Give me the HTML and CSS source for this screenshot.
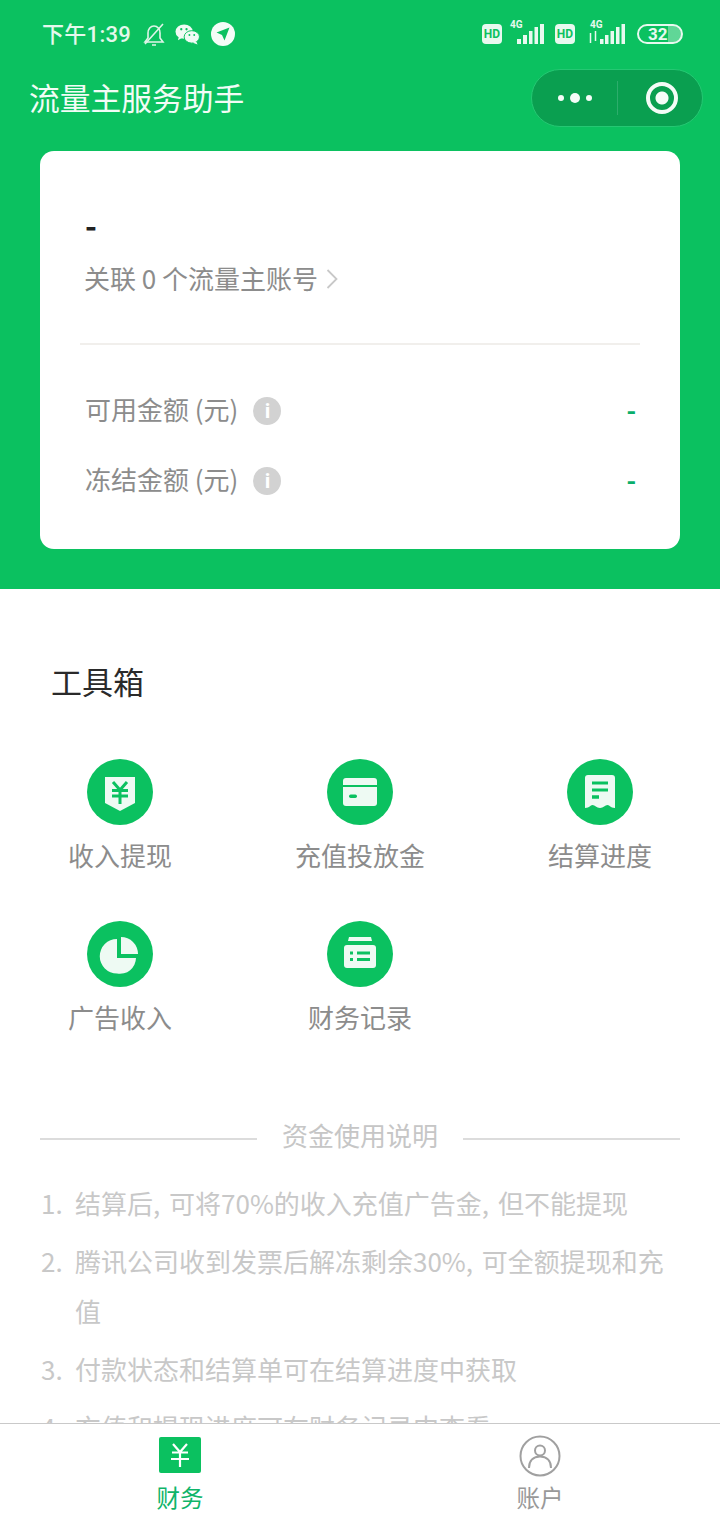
FILE: index.html
```html
<!DOCTYPE html>
<html lang="zh-CN">
<head>
    <meta charset="UTF-8">
    <meta name="viewport" content="width=device-width, initial-scale=1.0">
    <title>流量主服务助手</title>
    <link rel="stylesheet" href="styles.css">
</head>
<body>
    <div id="main">
        <div class="top">
            <div class="status_bar">
                <div class="status_left">
                    <span class="time">下午1:39</span>
                    <svg class="st_bell" viewBox="0 0 24 24" fill="none" stroke="#dff5e8" stroke-width="1.6">
                        <path d="M3 20h18l-3-4v-5c0-4-2.500-7-6-7s-6 3-6 7v5z"/>
                        <path d="M10 23h4M3 22L21 2"/>
                    </svg>
                    <svg class="st_wechat" viewBox="0 0 26 24" fill="#f1fbf5">
                        <ellipse cx="9.500" cy="9" rx="9" ry="7.500"/>
                        <path d="M4 14l-1 4 5-3z"/>
                        <ellipse cx="17.500" cy="14.500" rx="8" ry="6.500" stroke="#0bc160" stroke-width="1"/>
                        <path d="M22 19l1.500 3.500-5-2z"/>
                        <circle cx="6.500" cy="6.500" r="1.200" fill="#0bc160"/>
                        <circle cx="12" cy="6.500" r="1.200" fill="#0bc160"/>
                        <circle cx="15" cy="12.500" r="1" fill="#0bc160"/>
                        <circle cx="20" cy="12.500" r="1" fill="#0bc160"/>
                    </svg>
                    <svg class="st_nav" viewBox="0 0 24 24">
                        <circle cx="12" cy="12" r="12" fill="#f4fcf7"/>
                        <path d="M18.500 5.500L5.500 10.500l5.500 2.500 2.500 5.500z" fill="#0bc160"/>
                    </svg>
                </div>
                <div class="status_right">
                    <span class="hd">HD</span>
                    <span class="signal sig_one">
                        <span class="net">4G</span>
                        <svg class="bars" viewBox="0 0 27 20" fill="#e8f9ef">
                            <rect x="0" y="15" width="4" height="5"/>
                            <rect x="6" y="11" width="4" height="9"/>
                            <rect x="12" y="7" width="3.500" height="13"/>
                            <rect x="17.500" y="3" width="3.500" height="17"/>
                            <rect x="23" y="0" width="4" height="20"/>
                        </svg>
                    </span>
                    <span class="hd">HD</span>
                    <span class="signal sig_two">
                        <span class="net">4G</span>
                        <svg class="arrows" viewBox="0 0 10 12" fill="none" stroke="#e8f9ef" stroke-width="1.500">
                            <path d="M2.500 12V2M7.500 0v10"/>
                        </svg>
                        <svg class="bars" viewBox="0 0 25 20" fill="#e8f9ef">
                            <rect x="0" y="15" width="3.500" height="5"/>
                            <rect x="5" y="11" width="3.500" height="9"/>
                            <rect x="10.500" y="7" width="3.500" height="13"/>
                            <rect x="16" y="3" width="3.500" height="17"/>
                            <rect x="21.500" y="0" width="3.500" height="20"/>
                        </svg>
                    </span>
                    <span class="battery">32</span>
                </div>
            </div>

            <div class="nav_bar">
                <span class="nav_title">流量主服务助手</span>
                <div class="capsule">
                    <div class="capsule_btn capsule_more">
                        <span class="dot"></span>
                        <span class="dot dot_big"></span>
                        <span class="dot"></span>
                    </div>
                    <div class="capsule_sep"></div>
                    <div class="capsule_btn capsule_home">
                        <span class="target"></span>
                    </div>
                </div>
            </div>

            <div class="card">
                <div class="acc_name">-</div>
                <div class="acc_link">
                    <span>关联 0 个流量主账号</span>
                    <svg class="chevron" viewBox="0 0 12 22" fill="none" stroke="#c8c8c8" stroke-width="1.800">
                        <path d="M1.500 2l9 9-9 9"/>
                    </svg>
                </div>
                <div class="divider"></div>
                <div class="amount_row">
                    <span>可用金额 (元)</span>
                    <span class="info">i</span>
                    <span class="amount">-</span>
                </div>
                <div class="amount_row">
                    <span>冻结金额 (元)</span>
                    <span class="info">i</span>
                    <span class="amount">-</span>
                </div>
            </div>
        </div>

        <div class="tools">
            <h2>工具箱</h2>
            <div class="tool_grid">
                <div class="tool">
                    <svg class="tool_icon" viewBox="0 0 66 66">
                        <circle cx="33" cy="33" r="33" fill="#0bc160"/>
                        <path d="M18 18h30v26l-15 8-15-8z" fill="#eefaf3"/>
                        <path d="M26 23l7 8 7-8M33 31v14M25 31.500h16M25 37h16" fill="none" stroke="#0bc160" stroke-width="3"/>
                    </svg>
                    <span>收入提现</span>
                </div>
                <div class="tool">
                    <svg class="tool_icon" viewBox="0 0 66 66">
                        <circle cx="33" cy="33" r="33" fill="#0bc160"/>
                        <path d="M16 22a3 3 0 0 1 3-3h28a3 3 0 0 1 3 3v4H16z" fill="#eefaf3"/>
                        <path d="M16 28h34v16a3 3 0 0 1-3 3H19a3 3 0 0 1-3-3z" fill="#eefaf3"/>
                        <rect x="22" y="35.500" width="8" height="3.500" rx="1.700" fill="#0bc160"/>
                    </svg>
                    <span>充值投放金</span>
                </div>
                <div class="tool">
                    <svg class="tool_icon" viewBox="0 0 66 66">
                        <circle cx="33" cy="33" r="33" fill="#0bc160"/>
                        <path d="M18 19a3 3 0 0 1 3-3h24a3 3 0 0 1 3 3v30c-5 0-5-3-7.500-3s-4 3-7.500 3-5-3-7.500-3-2.500 3-7.500 3z" fill="#eefaf3"/>
                        <path d="M25 24h16M25 31h16" stroke="#0bc160" stroke-width="3"/>
                        <path d="M25 38h7" stroke="#0bc160" stroke-width="3.500"/>
                    </svg>
                    <span>结算进度</span>
                </div>
                <div class="tool">
                    <svg class="tool_icon" viewBox="0 0 66 66">
                        <circle cx="33" cy="33" r="33" fill="#0bc160"/>
                        <path d="M30 18v19h19a16 16 0 0 1-19 15.500A16.500 16.500 0 0 1 30 18z" fill="#eefaf3"/>
                        <path d="M34 16a17 17 0 0 1 17 17H34z" fill="#eefaf3"/>
                    </svg>
                    <span>广告收入</span>
                </div>
                <div class="tool">
                    <svg class="tool_icon" viewBox="0 0 66 66">
                        <circle cx="33" cy="33" r="33" fill="#0bc160"/>
                        <path d="M22 16h22l1 4H21z" fill="#eefaf3"/>
                        <rect x="17" y="24" width="32" height="23" rx="3" fill="#eefaf3"/>
                        <path d="M30 32h13M30 38.500h13M23 32h3M23 38.500h3" stroke="#0bc160" stroke-width="3"/>
                    </svg>
                    <span>财务记录</span>
                </div>
            </div>
        </div>

        <div class="notes">
            <div class="notes_title">
                <span class="line"></span>
                <span>资金使用说明</span>
                <span class="line"></span>
            </div>
            <ol class="notes_list">
                <li><span class="num">1.</span><span>结算后, 可将70%的收入充值广告金, 但不能提现</span></li>
                <li><span class="num">2.</span><span>腾讯公司收到发票后解冻剩余30%, 可全额提现和充值</span></li>
                <li><span class="num">3.</span><span>付款状态和结算单可在结算进度中获取</span></li>
                <li><span class="num">4.</span><span>充值和提现进度可在财务记录中查看</span></li>
            </ol>
        </div>
    </div>

    <div class="tab_bar">
        <div class="tab tab_active">
            <svg class="tab_icon" viewBox="0 0 42 36">
                <rect width="42" height="36" rx="2" fill="#0bc160"/>
                <path d="M14 7l7 8 7-8M21 15v15M13 15.500h16M12 22h18" fill="none" stroke="#fff" stroke-width="2.200"/>
            </svg>
            <span>财务</span>
        </div>
        <div class="tab">
            <svg class="tab_icon" viewBox="0 0 42 42" fill="none" stroke="#a0a0a0" stroke-width="2">
                <circle cx="21" cy="21" r="19.500"/>
                <circle cx="21" cy="15.500" r="5"/>
                <path d="M10 33c0-8 5-11.500 11-11.500S32 25 32 33"/>
            </svg>
            <span>账户</span>
        </div>
    </div>
</body>
</html>
```

FILE: styles.css
```css
/* Resetting some default styles */
* {
    margin: 0;
    padding: 0;
    box-sizing: border-box;
}

body {
    font-family: "Noto Sans CJK SC", "Noto Sans", sans-serif;
    background: #fff;
    color: #888;
    width: 720px;
    height: 1520px;
    overflow: hidden;
    position: relative;
}

#main {
    height: 1520px;
    overflow: hidden;
}

.top {
    background: #0bc160;
    height: 589px;
}

/* status bar */
.status_bar {
    height: 68px;
    display: flex;
    justify-content: space-between;
    align-items: center;
    padding: 0 37px 0 42px;
}

.status_left,
.status_right {
    display: flex;
    align-items: center;
}

.time {
    font-family: Roboto, "Noto Sans CJK SC", sans-serif;
    font-size: 22px;
    font-weight: 500;
    line-height: 28px;
    margin-top: 1px;
    color: #e4f8ec;
    letter-spacing: 0.3px;
}

.st_bell {
    width: 24px;
    height: 24px;
    margin-left: 11px;
}

.st_wechat {
    width: 25px;
    height: 23px;
    margin-left: 9px;
}

.st_nav {
    width: 24px;
    height: 24px;
    margin-left: 11px;
}

.hd {
    width: 20px;
    height: 20px;
    border-radius: 4px;
    background: #e8f9ef;
    color: #0bc160;
    font-family: Roboto, sans-serif;
    font-size: 12px;
    font-weight: 700;
    line-height: 20px;
    text-align: center;
}

.signal {
    position: relative;
    height: 20px;
    display: flex;
    align-items: flex-end;
    justify-content: flex-end;
}

.sig_one {
    width: 34px;
    margin: 0 11px 0 8px;
}

.sig_two {
    width: 37px;
    margin: 0 12px 0 13px;
}

.net {
    position: absolute;
    left: 0;
    top: -5px;
    line-height: 12px;
    font-family: Roboto, sans-serif;
    font-size: 10px;
    font-weight: 700;
    color: #e8f9ef;
}

.sig_two .net {
    left: 2px;
}

.arrows {
    position: absolute;
    left: 0;
    bottom: 1px;
    width: 10px;
    height: 12px;
}

.bars {
    width: 27px;
    height: 20px;
}

.sig_two .bars {
    width: 25px;
}

.battery {
    width: 46px;
    height: 20px;
    border: 2px solid #e8f9ef;
    border-radius: 10px;
    color: #e8f9ef;
    font-family: Roboto, sans-serif;
    font-size: 17px;
    font-weight: 700;
    line-height: 16px;
    padding-left: 9px;
    background: linear-gradient(to right, transparent 70%, rgba(255, 255, 255, 0.35) 70%);
}

/* title bar */
.nav_bar {
    height: 60px;
    display: flex;
    justify-content: space-between;
    align-items: center;
    padding: 0 17px 0 29px;
}

.nav_title {
    font-size: 30.750px;
    color: #f2fcf6;
    white-space: nowrap;
    margin-bottom: 4px;
}

.capsule {
    width: 172px;
    height: 58px;
    border-radius: 29px;
    background: #0a9f50;
    border: 1px solid #25c873;
    display: flex;
    align-items: center;
}

.capsule_btn {
    display: flex;
    justify-content: center;
    align-items: center;
    gap: 6px;
}

.capsule_more {
    flex: none;
    width: 85px;
}

.capsule_home {
    flex: 1;
    padding-left: 4px;
}

.capsule_sep {
    flex: none;
    width: 1px;
    height: 34px;
    background: #2dad6c;
}

.dot {
    width: 6px;
    height: 6px;
    border-radius: 50%;
    background: #f4fcf7;
}

.dot_big {
    width: 10px;
    height: 10px;
}

.target {
    width: 32px;
    height: 32px;
    border-radius: 50%;
    border: 4px solid #f4fcf7;
    display: flex;
    justify-content: center;
    align-items: center;
    background: radial-gradient(circle, #f4fcf7 0, #f4fcf7 6px, transparent 7px);
}

/* card */
.card {
    margin: 23px 40px 0;
    height: 398px;
    background: #fff;
    border-radius: 14px;
    padding: 55px 40px 0;
}

.acc_name {
    height: 36px;
    line-height: 36px;
    padding-left: 5px;
    font-size: 32px;
    font-weight: 700;
    color: #222;
}

.acc_link {
    height: 40px;
    margin-top: 15px;
    padding-left: 4px;
    display: flex;
    align-items: center;
    font-size: 26px;
    color: #8c8c8c;
}

.chevron {
    width: 12px;
    height: 22px;
    margin-left: 8px;
    margin-top: 4px;
}

.divider {
    height: 2px;
    background: #f1efec;
    margin-top: 46px;
}

.amount_row {
    height: 40px;
    margin-top: 30px;
    padding: 0 4px 0 5px;
    display: flex;
    align-items: center;
    font-size: 26px;
    color: #8c8c8c;
}

.divider + .amount_row {
    margin-top: 43px;
}

.info {
    width: 28px;
    height: 28px;
    margin: 6px 0 0 15px;
    border-radius: 50%;
    background: #d2d2d2;
    color: #fff;
    font-family: Roboto, sans-serif;
    font-size: 21px;
    font-weight: 700;
    line-height: 28px;
    text-align: center;
}

.amount {
    margin-left: auto;
    color: #0aae6b;
    font-weight: 700;
}

/* tools */
.tools {
    padding-top: 68px;
}

.tools h2 {
    height: 48px;
    line-height: 48px;
    padding-left: 51px;
    font-size: 31px;
    font-weight: 400;
    color: #2a2a2a;
}

.tool_grid {
    display: grid;
    grid-template-columns: repeat(3, 240px);
    grid-auto-rows: 162px;
    margin-top: 54px;
}

.tool {
    display: flex;
    flex-direction: column;
    align-items: center;
    font-size: 26px;
    color: #8c8c8c;
}

.tool span {
    margin-top: 10px;
    line-height: 40px;
}

.tool_icon {
    width: 66px;
    height: 66px;
}

/* notes */
.notes {
    margin-top: 31px;
    padding: 0 40px;
    color: #c8c8c8;
    font-size: 26px;
}

.notes_title {
    display: flex;
    align-items: center;
    justify-content: space-between;
    height: 40px;
    color: #c6c6c6;
}

.line {
    width: 217px;
    height: 2px;
    margin-top: 10px;
    background: #dcdcdc;
}

.notes_list {
    list-style: none;
    margin-top: 24px;
    word-spacing: 3px;
}

.notes_list li {
    display: flex;
    line-height: 50px;
    margin-bottom: 8px;
}

.num {
    flex: none;
    width: 35px;
    padding-left: 1px;
}

/* bottom tabs */
.tab_bar {
    position: absolute;
    left: 0;
    right: 0;
    bottom: 0;
    height: 97px;
    background: #fff;
    border-top: 1px solid #c9c9c9;
    display: flex;
}

.tab {
    flex: 1;
    display: flex;
    flex-direction: column;
    align-items: center;
    font-size: 23.500px;
    color: #999;
}

.tab span {
    position: absolute;
    bottom: 6px;
    line-height: 34px;
}

.tab_icon {
    margin-top: 11px;
    width: 42px;
    height: 42px;
}

.tab_active {
    color: #0fb469;
}

.tab_active .tab_icon {
    margin-top: 13px;
    height: 36px;
}
```
